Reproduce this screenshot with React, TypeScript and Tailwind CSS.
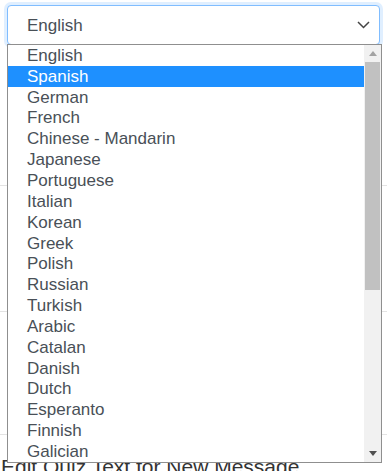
import React from "react";

const langs = [
  "English",
  "Spanish",
  "German",
  "French",
  "Chinese - Mandarin",
  "Japanese",
  "Portuguese",
  "Italian",
  "Korean",
  "Greek",
  "Polish",
  "Russian",
  "Turkish",
  "Arabic",
  "Catalan",
  "Danish",
  "Dutch",
  "Esperanto",
  "Finnish",
  "Galician",
];

export default function App() {
  return (
    <div
      className="relative w-[387px] h-[471px] overflow-hidden bg-white text-[#495057]"
      style={{ fontFamily: '"Liberation Sans", Arial, sans-serif' }}
    >
      {/* background page */}
      <div className="flex flex-col">
        <div className="h-[186px] border-b border-[#e3e3e3] pt-[5px] px-[7px]">
          <div className="flex h-[40px] items-center justify-between rounded-[4px] border border-[#80bdff] bg-white pl-[19px] pr-[9px] shadow-[0_0_0_3px_rgba(0,123,255,0.12)]">
            <span className="text-[17px] leading-none">English</span>
            <svg width="13" height="8" viewBox="0 0 13 8">
              <polyline points="1,1 6.5,6.5 12,1" fill="none" stroke="#444" strokeWidth="1.5" />
            </svg>
          </div>
        </div>
        <div className="h-[126px] border-b border-[#e3e3e3]" />
        <div className="h-[123px] border-b border-[#e3e3e3]" />
        <div className="pt-[21px] pl-[1px] text-[21px] leading-none text-[#333] whitespace-nowrap">
          Edit Quiz Text for New Message
        </div>
      </div>

      {/* open listbox overlay */}
      <div className="absolute left-[7px] top-[44px] flex h-[419px] w-[375px] border border-[#8f8f8f] bg-white">
        <div className="flex-1 flex flex-col">
          {langs.map((l) => (
            <div
              key={l}
              className={
                l === "Spanish"
                  ? "h-[20.85px] flex items-center pl-[19px] text-[17px] leading-none bg-[#1e90ff] text-white"
                  : "h-[20.85px] flex items-center pl-[19px] text-[17px] leading-none"
              }
            >
              {l}
            </div>
          ))}
        </div>
        <div className="flex w-[17px] flex-col bg-[#f1f1f1]">
          <div className="flex h-[17px] items-center justify-center">
            <svg width="8" height="5" viewBox="0 0 8 5">
              <polygon points="0,5 4,0 8,5" fill="#a3a3a3" />
            </svg>
          </div>
          <div className="mx-[1px] h-[228px] bg-[#c1c1c1]" />
          <div className="flex-1" />
          <div className="flex h-[17px] items-center justify-center">
            <svg width="8" height="5" viewBox="0 0 8 5">
              <polygon points="0,0 8,0 4,5" fill="#505050" />
            </svg>
          </div>
        </div>
      </div>
    </div>
  );
}
